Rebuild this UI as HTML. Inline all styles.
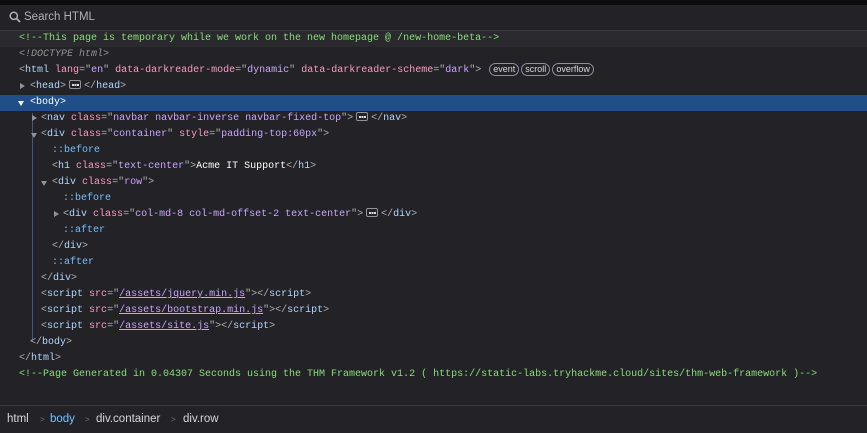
<!DOCTYPE html>
<html><head><style>
body{margin:0;width:867px;height:432px;background:#232327;overflow:hidden;position:relative;font-family:"Liberation Mono",monospace;}
.top{position:absolute;left:0;top:0;width:867px;height:5px;background:#0c0c0d;}
.search{position:absolute;left:0;top:5px;width:867px;height:25px;background:#232327;border-bottom:1px solid #38383d;font-family:"Liberation Sans",sans-serif;font-size:11.5px;color:#b1b1b3;}
.search span{position:absolute;left:24px;top:6px;}
.rows{position:absolute;left:0;top:31px;width:867px;}
.r{height:16px;line-height:16px;font-size:10px;white-space:pre;position:relative;color:#b1b1b3;}
.r .t{position:absolute;top:0;}
.sel{background:#204e8a;}
.cm{color:#86de74}.tg{color:#b1d5ff}.an{color:#ff97c3}.av{color:#c9a4ff}.ps{color:#75bfff}
.dt{color:#939395;font-style:italic}
.ar{position:absolute;top:4px;width:0;height:0;}
.ar.c{border-left:5px solid #939395;border-top:3.5px solid transparent;border-bottom:3.5px solid transparent;}
.ar.o{top:6px;border-top:5px solid #939395;border-left:3.5px solid transparent;border-right:3.5px solid transparent;}
.sel .ar.o{border-top-color:#fff}
.sel .tg{color:#fff}
.dots{display:inline-block;width:12px;height:9px;border:1px solid #939395;border-radius:2px;vertical-align:-1px;margin:0 3px;position:relative;box-sizing:border-box;}
.dots::after{content:"";position:absolute;left:2px;top:3px;width:1.5px;height:1.5px;background:#ddd;box-shadow:2.5px 0 #ddd,5px 0 #ddd;}
.b{display:inline-block;border:1px solid #8f8f9d;border-radius:7px;padding:0 3px;line-height:11px;font-size:9px;font-family:"Liberation Sans",sans-serif;color:#d7d7db;margin-left:2px;}
.u{text-decoration:underline}
.guide{position:absolute;left:32px;top:113px;width:1px;height:229px;background:#3a5a86;}
.bc{position:absolute;left:0;top:405px;width:867px;height:27px;border-top:1px solid #38383d;background:#232327;font-family:"Liberation Sans",sans-serif;font-size:11.5px;color:#d7d7db;}
.bc span{position:absolute;top:7px}
.sep{color:#737373;font-size:8px;}
</style></head><body>
<div class="top"></div>
<div class="search"><svg style="position:absolute;left:9px;top:6px" width="12" height="12" viewBox="0 0 12 12"><circle cx="4.8" cy="4.8" r="3.6" fill="none" stroke="#b1b1b3" stroke-width="1.5"/><path d="M7.5 7.5L11 11" stroke="#b1b1b3" stroke-width="1.8"/></svg><span>Search HTML</span></div>
<div class="guide"></div>
<div class="rows">
<div class="r" style="background:#2a2a2e"><span class="t cm" style="left:19px">&lt;!--This page is temporary while we work on the new homepage @ /new-home-beta--&gt;</span></div>
<div class="r"><span class="t dt" style="left:19px">&lt;!DOCTYPE html&gt;</span></div>
<div class="r"><span class="t" style="left:19px">&lt;<span class="tg">html</span> <span class="an">lang</span>="<span class="av">en</span>" <span class="an">data-darkreader-mode</span>="<span class="av">dynamic</span>" <span class="an">data-darkreader-scheme</span>="<span class="av">dark</span>"&gt; <span class="b">event</span><span class="b">scroll</span><span class="b">overflow</span></span></div>
<div class="r"><span class="ar c" style="left:20px"></span><span class="t" style="left:30px">&lt;<span class="tg">head</span>&gt;<span class="dots"></span>&lt;/<span class="tg">head</span>&gt;</span></div>
<div class="r sel"><span class="ar o" style="left:18px"></span><span class="t" style="left:30px;color:#fff">&lt;<span class="tg">body</span>&gt;</span></div>
<div class="r"><span class="ar c" style="left:32px"></span><span class="t" style="left:41px">&lt;<span class="tg">nav</span> <span class="an">class</span>="<span class="av">navbar navbar-inverse navbar-fixed-top</span>"&gt;<span class="dots"></span>&lt;/<span class="tg">nav</span>&gt;</span></div>
<div class="r"><span class="ar o" style="left:31px"></span><span class="t" style="left:41px">&lt;<span class="tg">div</span> <span class="an">class</span>="<span class="av">container</span>" <span class="an">style</span>="<span class="av">padding-top:60px</span>"&gt;</span></div>
<div class="r"><span class="t ps" style="left:52px">::before</span></div>
<div class="r"><span class="t" style="left:52px">&lt;<span class="tg">h1</span> <span class="an">class</span>="<span class="av">text-center</span>"&gt;<span style="color:#fff">Acme IT Support</span>&lt;/<span class="tg">h1</span>&gt;</span></div>
<div class="r"><span class="ar o" style="left:41px"></span><span class="t" style="left:52px">&lt;<span class="tg">div</span> <span class="an">class</span>="<span class="av">row</span>"&gt;</span></div>
<div class="r"><span class="t ps" style="left:63px">::before</span></div>
<div class="r"><span class="ar c" style="left:54px"></span><span class="t" style="left:63px">&lt;<span class="tg">div</span> <span class="an">class</span>="<span class="av">col-md-8 col-md-offset-2 text-center</span>"&gt;<span class="dots"></span>&lt;/<span class="tg">div</span>&gt;</span></div>
<div class="r"><span class="t ps" style="left:63px">::after</span></div>
<div class="r"><span class="t" style="left:52px">&lt;/<span class="tg">div</span>&gt;</span></div>
<div class="r"><span class="t ps" style="left:52px">::after</span></div>
<div class="r"><span class="t" style="left:41px">&lt;/<span class="tg">div</span>&gt;</span></div>
<div class="r"><span class="t" style="left:41px">&lt;<span class="tg">script</span> <span class="an">src</span>="<span class="av u">/assets/jquery.min.js</span>"&gt;&lt;/<span class="tg">script</span>&gt;</span></div>
<div class="r"><span class="t" style="left:41px">&lt;<span class="tg">script</span> <span class="an">src</span>="<span class="av u">/assets/bootstrap.min.js</span>"&gt;&lt;/<span class="tg">script</span>&gt;</span></div>
<div class="r"><span class="t" style="left:41px">&lt;<span class="tg">script</span> <span class="an">src</span>="<span class="av u">/assets/site.js</span>"&gt;&lt;/<span class="tg">script</span>&gt;</span></div>
<div class="r"><span class="t" style="left:30px">&lt;/<span class="tg">body</span>&gt;</span></div>
<div class="r"><span class="t" style="left:19px">&lt;/<span class="tg">html</span>&gt;</span></div>
<div class="r"><span class="t cm" style="left:19px">&lt;!--Page Generated in 0.04307 Seconds using the THM Framework v1.2 ( https://static-labs.tryhackme.cloud/sites/thm-web-framework )--&gt;</span></div>
</div>
<div class="bc"><span style="left:7px">html</span><span class="sep" style="left:40px;top:9px">&gt;</span><span style="left:50px;color:#75bfff">body</span><span class="sep" style="left:85px;top:9px">&gt;</span><span style="left:96px">div.container</span><span class="sep" style="left:171px;top:9px">&gt;</span><span style="left:183px">div.row</span></div>
</body></html>
